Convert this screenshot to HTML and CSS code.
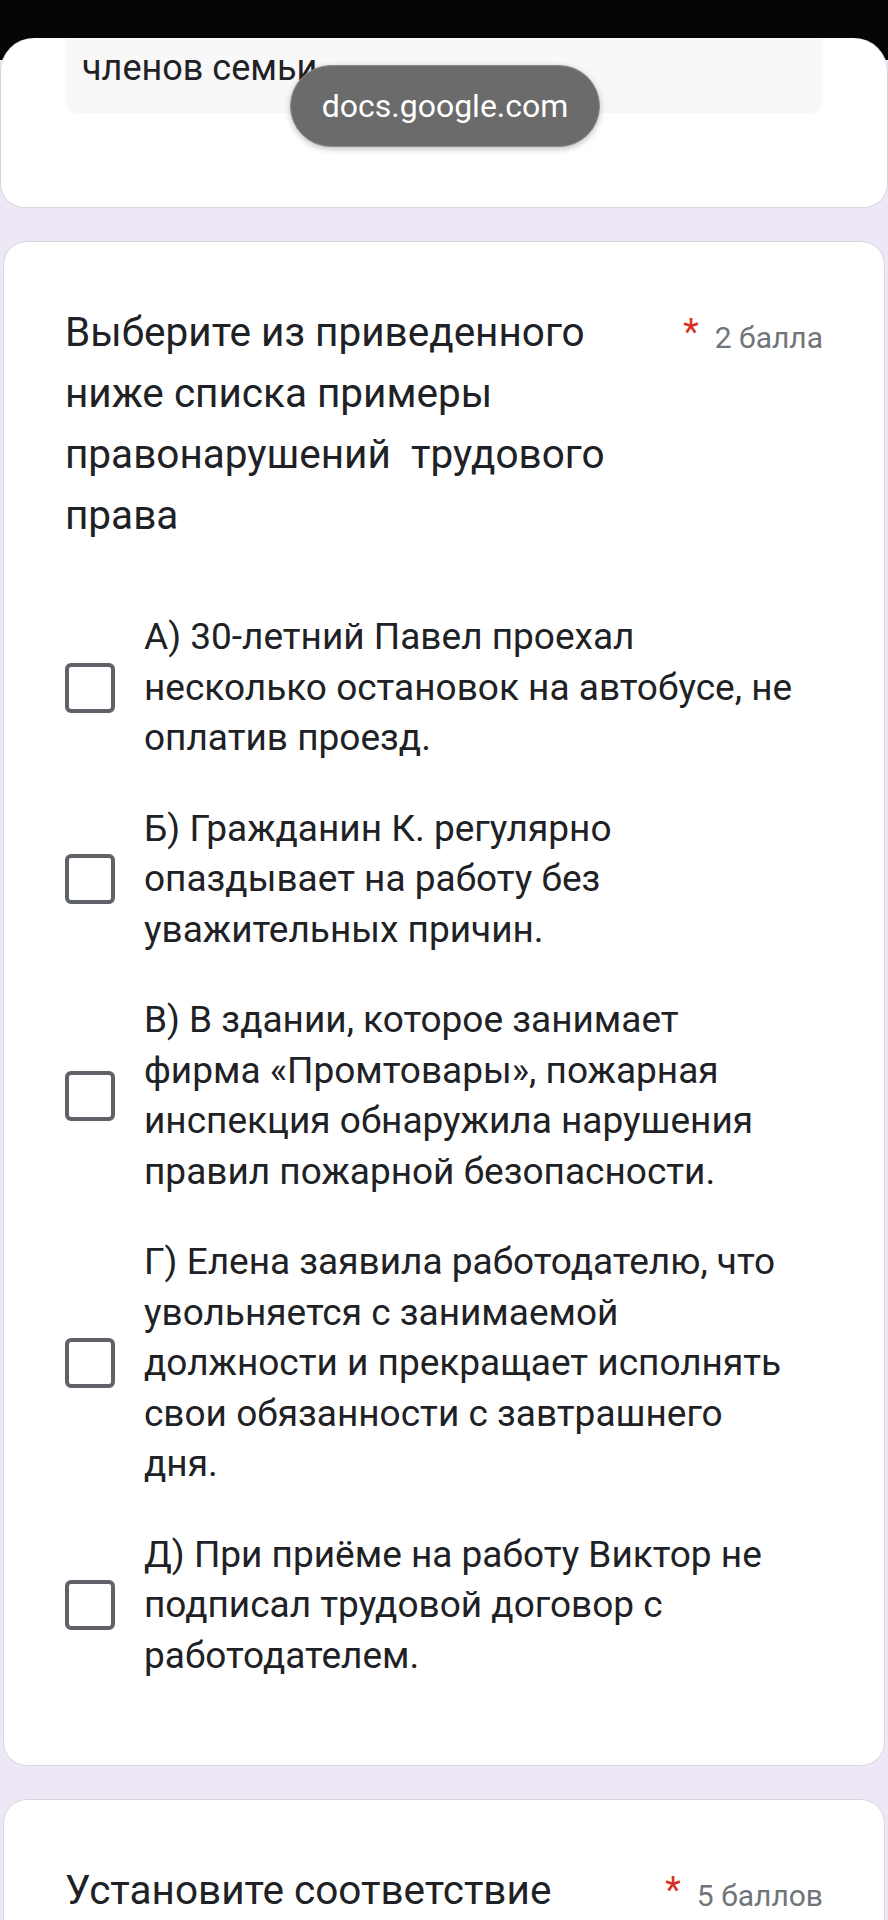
FILE: index.html
```
<!DOCTYPE html>
<html lang="ru">
<head>
  <meta charset="UTF-8" />
  <meta name="viewport" content="width=device-width, initial-scale=1.0"/>
  <title>Форма</title>
  <link rel="stylesheet" href="styles.css">
</head>
<body>
  <div class="status"></div>

  <div class="sheet">
    <section class="card card-first">
      <div class="answer-box">членов семьи</div>
      <div class="url-pill">docs.google.com</div>
    </section>

    <section class="card">
      <div class="q-head">
        <h2 class="q-title">Выберите из приведенного ниже списка примеры правонарушений&nbsp; трудового права</h2>
        <div class="q-points"><span class="req">*</span>2 балла</div>
      </div>

      <div class="options">
        <label class="option">
          <span class="box"></span>
          <span class="opt-text">А) 30-летний Павел проехал<br>несколько остановок на автобусе, не<br>оплатив проезд.</span>
        </label>
        <label class="option">
          <span class="box"></span>
          <span class="opt-text">Б) Гражданин К. регулярно<br>опаздывает на работу без<br>уважительных причин.</span>
        </label>
        <label class="option">
          <span class="box"></span>
          <span class="opt-text">В) В здании, которое занимает<br>фирма «Промтовары», пожарная<br>инспекция обнаружила нарушения<br>правил пожарной безопасности.</span>
        </label>
        <label class="option">
          <span class="box"></span>
          <span class="opt-text">Г) Елена заявила работодателю, что<br>увольняется с занимаемой<br>должности и прекращает исполнять<br>свои обязанности с завтрашнего<br>дня.</span>
        </label>
        <label class="option">
          <span class="box"></span>
          <span class="opt-text">Д) При приёме на работу Виктор не<br>подписал трудовой договор с<br>работодателем.</span>
        </label>
      </div>
    </section>

    <section class="card card-last">
      <div class="q-head">
        <h2 class="q-title">Установите соответствие</h2>
        <div class="q-points"><span class="req">*</span>5 баллов</div>
      </div>
    </section>
  </div>
</body>
</html>
```

FILE: styles.css
```
* { margin: 0; padding: 0; box-sizing: border-box; }
body { font-family: Roboto, 'Noto Sans', sans-serif; background: #ede7f6; color: #202124; overflow: hidden; height: 1920px; }

.status { height: 60px; background: #050505; }
.sheet { margin-top: -22px; display: flex; flex-direction: column; gap: 33px; }

.card { background: #fff; border: 1px solid #d6d7db; border-radius: 24px; margin: 0 3px; padding: 60px 61px 84px; }
.card-first { position: relative; margin: 0; border-radius: 34px 34px 24px 24px; border-top: none; padding: 0 64px; height: 170px; }
.card-last { padding-bottom: 200px; }

.answer-box { background: #f8f8f8; border-radius: 0 0 10px 10px; height: 75px; padding: 8px 17px 0; font-size: 36px; line-height: 44px; }

.url-pill { position: absolute; left: 289px; top: 27px; width: 310px; height: 82px; border-radius: 41px; background: #6b6b6b; border: 1px solid #8a8a8a; color: #fff; font-size: 32px; display: flex; align-items: center; justify-content: center; box-shadow: 0 2px 6px rgba(0,0,0,0.25); }

.q-head { display: flex; justify-content: space-between; align-items: flex-start; }
.q-title { font-weight: 400; font-size: 40.5px; line-height: 61px; width: 580px; }
.q-points { font-size: 30px; color: #70757a; line-height: 61px; white-space: nowrap; }
.req { color: #d93025; font-size: 36px; margin-right: 16px; vertical-align: 4px; }

.options { margin-top: 66px; display: flex; flex-direction: column; gap: 40px; }
.option { display: flex; align-items: center; gap: 29px; }
.box { width: 50px; height: 50px; border: 4px solid #5f6368; border-radius: 6px; flex-shrink: 0; }
.opt-text { font-size: 37px; line-height: 50.5px; }
```
